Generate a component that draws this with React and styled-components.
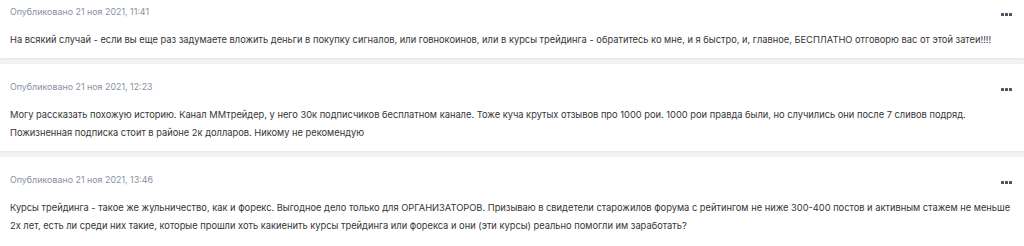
import React from "react";
import styled, { createGlobalStyle } from "styled-components";

const Global = createGlobalStyle`
  html, body { margin: 0; padding: 0; background: #ffffff; }
  body { font-family: Inter, "Noto Sans", sans-serif; -webkit-font-smoothing: antialiased; }
`;

const Feed = styled.div`
  display: flex;
  flex-direction: column;
  margin-top: -11px;
  background: #f4f4f5;
  gap: 6px;
`;

const Card = styled.article`
  background: #ffffff;
  padding: 14px 12px 9px 10px;
  box-shadow: 0 1px 3px rgba(0, 0, 0, 0.07);
`;

const Header = styled.div`
  display: flex;
  align-items: center;
  justify-content: space-between;
  height: 16px;
`;

const Meta = styled.span`
  font-size: 8.9px;
  color: #8a90a0;
`;

const More = styled.button`
  display: flex;
  gap: 1px;
  border: 0;
  background: none;
  padding: 0;
  margin-top: 6px;
  cursor: pointer;
`;

const Dot = styled.span`
  width: 3px;
  height: 3px;
  background: #4c5264;
  border-radius: 0.5px;
`;

const Body = styled.p`
  margin: 12px 0 0 0;
  font-size: 9.3px;
  line-height: 18px;
  color: #353535;
`;

const posts = [
  {
    date: "Опубликовано 21 ноя 2021, 11:41",
    text: "На всякий случай - если вы еще раз задумаете вложить деньги в покупку сигналов, или говнокоинов, или в курсы трейдинга - обратитесь ко мне, и я быстро, и, главное, БЕСПЛАТНО отговорю вас от этой затеи!!!!",
  },
  {
    date: "Опубликовано 21 ноя 2021, 12:23",
    text: "Могу рассказать похожую историю. Канал ММтрейдер, у него 30к подписчиков бесплатном канале. Тоже куча крутых отзывов про 1000 рои. 1000 рои правда были, но случились они после 7 сливов подряд. Пожизненная подписка стоит в районе 2к долларов. Никому не рекомендую",
  },
  {
    date: "Опубликовано 21 ноя 2021, 13:46",
    text: "Курсы трейдинга - такое же жульничество, как и форекс. Выгодное дело только для ОРГАНИЗАТОРОВ. Призываю в свидетели старожилов форума с рейтингом не ниже 300-400 постов и активным стажем не меньше 2х лет, есть ли среди них такие, которые прошли хоть какиенить курсы трейдинга или форекса и они (эти курсы) реально помогли им заработать?",
  },
];

export default function App() {
  return (
    <>
      <Global />
      <Feed>
        {posts.map((p, i) => (
          <Card key={i}>
            <Header>
              <Meta>{p.date}</Meta>
              <More aria-label="more">
                <Dot />
                <Dot />
                <Dot />
              </More>
            </Header>
            <Body>{p.text}</Body>
          </Card>
        ))}
      </Feed>
    </>
  );
}
